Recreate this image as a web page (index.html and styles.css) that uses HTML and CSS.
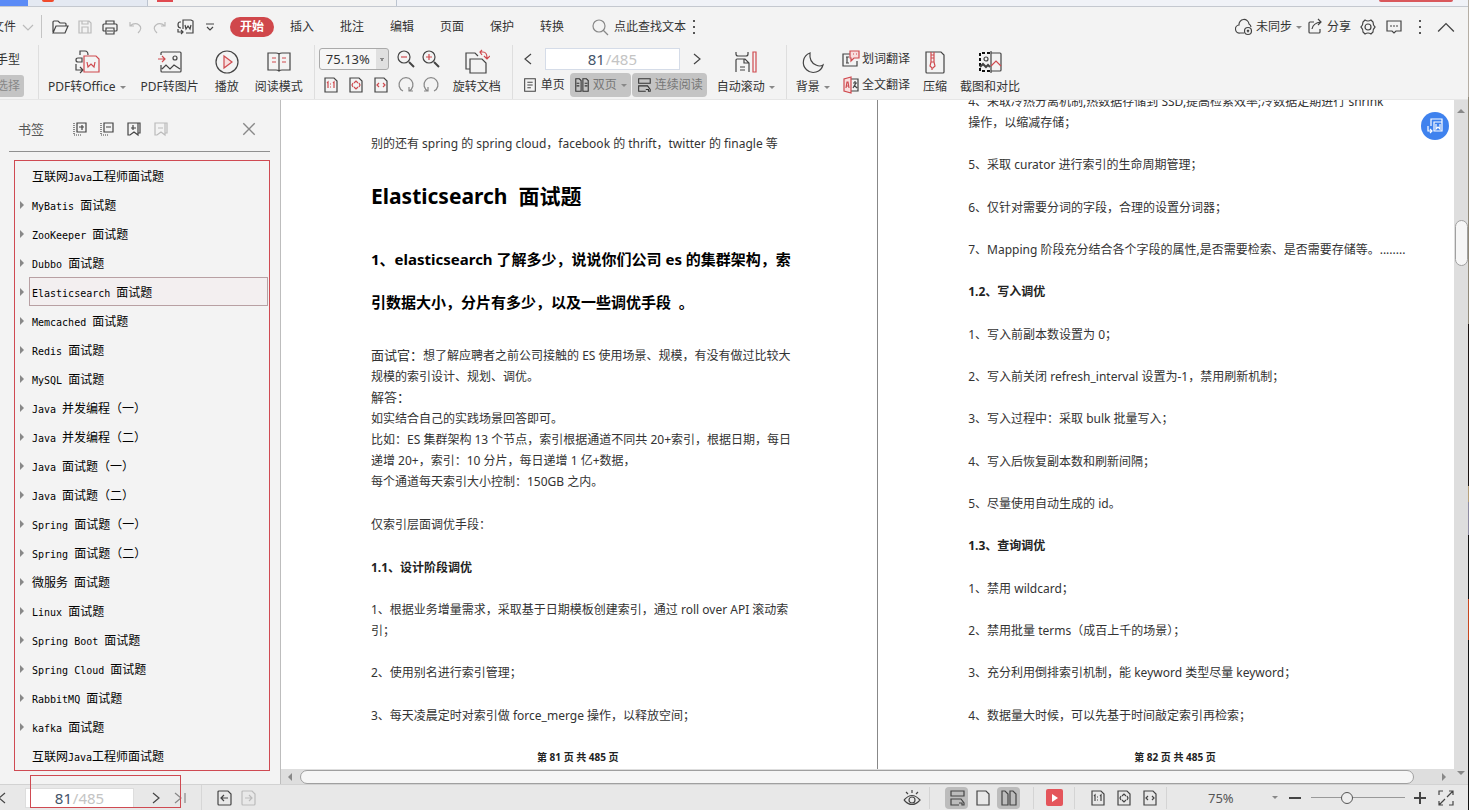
FILE: index.html
```html
<!DOCTYPE html>
<html lang="zh-CN">
<head>
<meta charset="utf-8">
<title>互联网Java工程师面试题</title>
<link rel="stylesheet" href="styles.css">
</head>
<body>
<svg class="defs" aria-hidden="true">
  <symbol id="down" viewBox="0 0 14 14"><path d="M2 5l5 5 5-5"/></symbol>
  <symbol id="up" viewBox="0 0 16 16"><path d="M1 12l7-7 7 7"/></symbol>
  <symbol id="left" viewBox="0 0 12 14"><path d="M9 2L3 7l6 5"/></symbol>
  <symbol id="right" viewBox="0 0 12 14"><path d="M3 2l6 5-6 5"/></symbol>
  <symbol id="last" viewBox="0 0 12 14"><path d="M1 2l6 5-6 5M11 2v10"/></symbol>
  <symbol id="open" viewBox="0 0 18 18"><path d="M2 14V4q0-1 1-1h4l2 2h5q1 0 1 1v2M2 15l3-7h12l-3 7H2z"/></symbol>
  <symbol id="save" viewBox="0 0 18 18"><path d="M3 3h10l2 2v10H3zM6 3v3h6V3M6 15V9h6v6"/></symbol>
  <symbol id="print" viewBox="0 0 18 18"><path d="M5 6V3h8v3M5 13H3q-1 0-1-1V7q0-1 1-1h12q1 0 1 1v5q0 1-1 1h-2M5 10h8v6H5zM6 13h6"/></symbol>
  <symbol id="undo" viewBox="0 0 18 18"><path d="M4 4v4h4M4 8q5-4 9-1t-1 8"/></symbol>
  <symbol id="redo" viewBox="0 0 18 18"><path d="M14 4v4h-4M14 8q-5-4-9-1t1 8"/></symbol>
  <symbol id="toword" viewBox="0 0 18 18"><path d="M7 11V2h8l2 1v12h-7M9 7l1 4 2-3 2 3 1-4M5 4H4q-2 0-2 3t3 3M2 11v3h5M5 12l2 2-2 2"/></symbol>
  <symbol id="more" viewBox="0 0 14 14"><path d="M3 4h8M4 7l3 3 3-3"/></symbol>
  <symbol id="search" viewBox="0 0 18 18"><circle cx="8" cy="8" r="6"/><path d="M12 12l5 5"/></symbol>
  <symbol id="dots" viewBox="0 0 6 18"><path class="f" d="M2 2h2v2H2zM2 8h2v2H2zM2 14h2v2H2z"/></symbol>
  <symbol id="cloud" viewBox="0 0 18 18"><path d="M9 15H5a4 4 0 0 1-1-8 5 5 0 0 1 10-1 4 4 0 0 1 2 3"/><circle cx="13" cy="13" r="3.5"/><path d="M12 12l2 2M14 12l-2 2"/></symbol>
  <symbol id="share" viewBox="0 0 18 18"><path d="M8 4H4q-1 0-1 1v9q0 1 1 1h9q1 0 1-1v-3M6 11q1-6 9-7M12 1l3 3-3 3"/></symbol>
  <symbol id="gear" viewBox="0 0 18 18"><path d="M6 2q3 2 6 0l2 2q0 3 2 5-2 2-2 5l-2 2q-3-2-6 0l-2-2q0-3-2-5 2-2 2-5z"/><circle cx="9" cy="9" r="3"/></symbol>
  <symbol id="chat" viewBox="0 0 18 18"><path d="M2 3h14v10h-5l-2 2-2-2H2zM5 8h2M8 8h2M11 8h2"/></symbol>
  <symbol id="office" viewBox="0 0 26 26"><path d="M6 6V2h5q3 0 3 4M6 9H4q-2 0-2 2t2 2h4V9H6M2 15v6h7M6 18l3 3-3 3"/><path class="r" d="M10 7h12l3 3v13H10zM13 13l1 5 3-3 3 3 1-5"/></symbol>
  <symbol id="picture" viewBox="0 0 26 26"><path d="M4 6V4q0-1 1-1h18q1 0 1 1v18q0 1-1 1H5q-1 0-1-1v-6M5 20l4-4 4 4 4-4 6 4"/><circle cx="18" cy="9" r="2"/><path class="r" d="M1 10h7M5 7l3 3-3 3"/></symbol>
  <symbol id="play" viewBox="0 0 26 26"><circle cx="13" cy="13" r="11"/><path class="r p" d="M10 7l8 6-8 6z"/></symbol>
  <symbol id="book" viewBox="0 0 26 26"><path d="M13 5q-1-1-3-1H2v17h8q2 0 3 1 1-1 3-1h8V4h-8q-2 0-3 1zM13 5v17"/><path class="r" d="M6 9h4M6 13h4M16 9h4M16 13h4"/></symbol>
  <symbol id="zoomout" viewBox="0 0 18 18"><circle cx="7" cy="7" r="6"/><path class="w" d="M12 12l5 5"/><path class="r" d="M4 7h6"/></symbol>
  <symbol id="zoomin" viewBox="0 0 18 18"><circle cx="7" cy="7" r="6"/><path class="w" d="M12 12l5 5"/><path class="r" d="M4 7h6M7 4v6"/></symbol>
  <symbol id="one" viewBox="0 0 18 18"><path d="M3 2h9l3 3v11H3z"/><path class="r" d="M5 7l1-1v6M11 7l1-1v6M8 8h1M8 11h1"/></symbol>
  <symbol id="fit" viewBox="0 0 18 18"><path d="M3 2h9l3 3v11H3z"/><path class="r" d="M7 7l2-2 2 2M7 11l2 2 2-2M6 7L5 9l1 2M12 7l1 2-1 2"/></symbol>
  <symbol id="width" viewBox="0 0 18 18"><path d="M3 2h9l3 3v11H3z"/><path class="r" d="M7 7L5 9l2 2M11 7l2 2-2 2"/></symbol>
  <symbol id="cw" viewBox="0 0 18 18"><path d="M6 15a7 7 0 1 1 6 0M12 11v4h4"/></symbol>
  <symbol id="ccw" viewBox="0 0 18 18"><path d="M12 15a7 7 0 1 0-6 0M6 11v4H2"/></symbol>
  <symbol id="rotate" viewBox="0 0 26 26"><path d="M6 20H2V4h9l3 3M6 10h12l4 4v10H6z"/><path class="r" d="M16 3h3q4 0 4 6M18 1l-2 2 2 3M20 7l3 3 3-3"/></symbol>
  <symbol id="single" viewBox="0 0 18 18"><path d="M3 2h12v14H3zM6 6h6M6 9h6M6 12h4"/></symbol>
  <symbol id="double" viewBox="0 0 18 18"><path d="M2 2h4l2 2v12H2zM10 2h4l2 2v12h-6zM3 7h3M3 10h3M12 7h3M12 10h3"/></symbol>
  <symbol id="cont" viewBox="0 0 18 18"><path d="M3 2h13v5H3zM11 16H3v-6h10l3 4v2h-2v-2h-3"/></symbol>
  <symbol id="scroll" viewBox="0 0 26 26"><path d="M3 3v2q0 2 2 2h8q2 0 2-2V3M3 23V11q0-1 1-1h8l4 4v9M11 10v4h5M7 18h5M7 21h5"/><path class="r" d="M20 3h3v20h-3z"/></symbol>
  <symbol id="moon" viewBox="0 0 26 26"><path d="M10 4A10 10 0 1 0 23 16Q20 18 16 16 9 13 10 4z"/></symbol>
  <symbol id="word" viewBox="0 0 18 18"><path d="M8 4H1v12h14v-5M4 7h3M5 7v6M4 13h3"/><path class="r p" d="M8 1h9v7h-5l-3 3V8H8zM11 4h1M14 4h1"/></symbol>
  <symbol id="trans" viewBox="0 0 18 18"><path d="M9 3h7v12H9M11 7h4M13 5v2M11 12l3-5M12 9l3 3"/><path class="r p" d="M9 1L2 3v12l7 2zM4 12l1-6h1l1 6M4 10h3"/></symbol>
  <symbol id="zip" viewBox="0 0 26 26"><path d="M4 3h15l3 3v17q0 1-1 1H5q-1 0-1-1z"/><path class="r" d="M9 3v10h3V3M9 6h3M9 9h3M9 13l-1 4 2 2h1l2-2-1-4M10 19v2"/></symbol>
  <symbol id="compare" viewBox="0 0 26 26"><path class="dash" d="M13 4H3v18h10"/><path class="w" d="M3 18l3-3 3 3 2-2 2 2"/><circle cx="9" cy="10" r="2"/><path d="M14 2v22M14 4h9q1 0 1 1v16q0 1-1 1h-9"/><path class="r" d="M14 17l5-5 5 5"/></symbol>
  <symbol id="expand" viewBox="0 0 16 16"><path d="M5 2h9v9H5zM7 6h5M10 4v5"/><path class="dot" d="M2 2v12h8"/></symbol>
  <symbol id="collapse" viewBox="0 0 16 16"><path d="M5 2h9v9H5zM7 6h5"/><path class="dot" d="M2 2v12h8"/></symbol>
  <symbol id="addmark" viewBox="0 0 16 16"><path d="M2 2h10v12l-4-3-4 3H2zM12 2h2v10h-2M5 7h5M7 4v5"/></symbol>
  <symbol id="delmark" viewBox="0 0 16 16"><path d="M2 2h10v12l-4-3-4 3H2zM12 2h2v10h-2M5 7h5"/></symbol>
  <symbol id="close" viewBox="0 0 14 14"><path d="M2 2l10 10M12 2L2 12"/></symbol>
  <symbol id="back" viewBox="0 0 18 18"><path d="M4 2h9l3 3v10q0 1-1 1H4q-1 0-1-1V3q0-1 1-1zM6 9h7M9 6L6 9l3 3"/></symbol>
  <symbol id="fwd" viewBox="0 0 18 18"><path d="M4 2h9l3 3v10q0 1-1 1H4q-1 0-1-1V3q0-1 1-1zM6 9h7M10 6l3 3-3 3"/></symbol>
  <symbol id="eye" viewBox="0 0 18 18"><path d="M1 11q8-9 16 0-8 9-16 0M9 1v3M3 3l2 2M15 3l-2 2"/><circle cx="9" cy="11" r="3"/></symbol>
  <symbol id="page" viewBox="0 0 18 18"><path d="M3 2h9l3 3v11H3z"/></symbol>
  <symbol id="pages" viewBox="0 0 18 18"><path d="M2 2h3l3 3v11H2zM10 2h3l3 3v11h-6z"/></symbol>
  <symbol id="minus" viewBox="0 0 14 14"><path class="w" d="M1 7h12"/></symbol>
  <symbol id="plus" viewBox="0 0 14 14"><path class="w" d="M1 7h12M7 1v12"/></symbol>
  <symbol id="full" viewBox="0 0 18 18"><path d="M2 6V2h4M16 12v4h-4M10 8l6-6M12 2h4v4M8 10l-6 6M2 12v4h4"/></symbol>
</svg>

<div class="window">
  <div class="tabs"><span class="tab home"></span><span class="tab"><i class="blob"></i></span><span class="tab current"><i class="blob pdf"></i></span><span class="login"></span></div>

  <header class="menu">
    <button class="file">文件<svg class="i14 pale"><use href="#down"/></svg></button>
    <i class="rule"></i>
    <div class="quick">
      <button aria-label="打开"><svg><use href="#open"/></svg></button>
      <button aria-label="保存"><svg class="pale"><use href="#save"/></svg></button>
      <button aria-label="打印"><svg><use href="#print"/></svg></button>
      <button aria-label="撤销"><svg class="pale"><use href="#undo"/></svg></button>
      <button aria-label="恢复"><svg class="pale"><use href="#redo"/></svg></button>
      <button aria-label="转Word"><svg><use href="#toword"/></svg></button>
      <button aria-label="更多"><svg class="i14"><use href="#more"/></svg></button>
    </div>
    <nav class="menus">
      <button class="on">开始</button><button>插入</button><button>批注</button><button>编辑</button><button>页面</button><button>保护</button><button>转换</button>
    </nav>
    <button class="find"><svg class="grey"><use href="#search"/></svg>点此查找文本<svg class="dots"><use href="#dots"/></svg></button>
    <div class="account">
      <button class="sync"><svg><use href="#cloud"/></svg>未同步<i class="caret"></i></button>
      <button><svg><use href="#share"/></svg>分享</button>
      <button aria-label="设置"><svg><use href="#gear"/></svg></button>
      <button aria-label="反馈"><svg><use href="#chat"/></svg></button>
      <button aria-label="更多"><svg><use href="#dots"/></svg></button>
      <button aria-label="收起"><svg><use href="#up"/></svg></button>
    </div>
  </header>

  <div class="ribbon">
    <div class="hand"><button>手型</button><button class="on">选择</button></div>
    <div class="group tools">
      <button class="big"><svg><use href="#office"/></svg><span>PDF转Office<i class="caret"></i></span></button>
      <button class="big"><svg><use href="#picture"/></svg><span>PDF转图片</span></button>
      <button class="big"><svg><use href="#play"/></svg><span>播放</span></button>
      <button class="big"><svg><use href="#book"/></svg><span>阅读模式</span></button>
    </div>
    <div class="group zoom">
      <div class="zoomgrid">
        <select aria-label="缩放比例"><option>75.13%</option></select>
        <button aria-label="缩小"><svg><use href="#zoomout"/></svg></button>
        <button aria-label="放大"><svg><use href="#zoomin"/></svg></button>
        <button aria-label="实际大小"><svg><use href="#one"/></svg></button>
        <button aria-label="适合页面"><svg><use href="#fit"/></svg></button>
        <button aria-label="适合宽度"><svg><use href="#width"/></svg></button>
        <button aria-label="顺时针"><svg class="grey"><use href="#cw"/></svg></button>
        <button aria-label="逆时针"><svg class="grey"><use href="#ccw"/></svg></button>
      </div>
      <button class="big"><svg><use href="#rotate"/></svg><span>旋转文档</span></button>
    </div>
    <div class="group view">
      <div class="stack">
        <div class="pager">
          <button aria-label="上一页"><svg><use href="#left"/></svg></button>
          <label class="pagebox"><input aria-label="页码" value="81"><span>/485</span></label>
          <button aria-label="下一页"><svg><use href="#right"/></svg></button>
        </div>
        <div class="modes">
          <button><svg><use href="#single"/></svg>单页</button>
          <button class="on"><svg><use href="#double"/></svg>双页<i class="caret"></i></button>
          <button class="on"><svg><use href="#cont"/></svg>连续阅读</button>
        </div>
      </div>
      <button class="big"><svg><use href="#scroll"/></svg><span>自动滚动<i class="caret"></i></span></button>
    </div>
    <div class="group last">
      <button class="big"><svg><use href="#moon"/></svg><span>背景<i class="caret"></i></span></button>
      <div class="stack trans">
        <button><svg><use href="#word"/></svg>划词翻译</button>
        <button><svg><use href="#trans"/></svg>全文翻译</button>
      </div>
      <button class="big"><svg><use href="#zip"/></svg><span>压缩</span></button>
      <button class="big"><svg><use href="#compare"/></svg><span>截图和对比</span></button>
    </div>
  </div>

  <div class="work">
    <aside class="side">
      <div class="sidehead">
        <h2>书签</h2>
        <button aria-label="展开"><svg><use href="#expand"/></svg></button>
        <button aria-label="折叠"><svg><use href="#collapse"/></svg></button>
        <button aria-label="添加书签"><svg><use href="#addmark"/></svg></button>
        <button aria-label="删除书签"><svg class="pale"><use href="#delmark"/></svg></button>
        <button class="x" aria-label="关闭"><svg class="i14 grey"><use href="#close"/></svg></button>
      </div>
      <ul class="marks">
        <li class="leaf"><a>互联网<b>Java</b>工程师面试题</a></li>
        <li><a><b>MyBatis </b>面试题</a></li>
        <li><a><b>ZooKeeper </b>面试题</a></li>
        <li><a><b>Dubbo </b>面试题</a></li>
        <li class="on"><a><b>Elasticsearch </b>面试题</a></li>
        <li><a><b>Memcached </b>面试题</a></li>
        <li><a><b>Redis </b>面试题</a></li>
        <li><a><b>MySQL </b>面试题</a></li>
        <li><a><b>Java </b>并发编程（一）</a></li>
        <li><a><b>Java </b>并发编程（二）</a></li>
        <li><a><b>Java </b>面试题（一）</a></li>
        <li><a><b>Java </b>面试题（二）</a></li>
        <li><a><b>Spring </b>面试题（一）</a></li>
        <li><a><b>Spring </b>面试题（二）</a></li>
        <li><a>微服务<b> </b>面试题</a></li>
        <li><a><b>Linux </b>面试题</a></li>
        <li><a><b>Spring Boot </b>面试题</a></li>
        <li><a><b>Spring Cloud </b>面试题</a></li>
        <li><a><b>RabbitMQ </b>面试题</a></li>
        <li><a><b>kafka </b>面试题</a></li>
        <li class="leaf"><a>互联网<b>Java</b>工程师面试题</a></li>
      </ul>
    </aside>

    <main class="viewer">
      <div class="pages">
        <article class="sheet first">
          <p>别的还有 spring 的 spring cloud，facebook 的 thrift，twitter 的 finagle 等</p>
          <h1>Elasticsearch&nbsp; 面试题</h1>
          <h2>1、elasticsearch 了解多少，说说你们公司 es 的集群架构，索<br>引数据大小，分片有多少，以及一些调优手段&nbsp; 。</h2>
          <p><big>面试官：</big>想了解应聘者之前公司接触的 ES 使用场景、规模，有没有做过比较大<br>规模的索引设计、规划、调优。<br><big>解答：</big><br>如实结合自己的实践场景回答即可。<br>比如：ES 集群架构 13 个节点，索引根据通道不同共 20+索引，根据日期，每日<br>递增 20+，索引：10 分片，每日递增 1 亿+数据，<br>每个通道每天索引大小控制：150GB 之内。</p>
          <p>仅索引层面调优手段：</p>
          <h3>1.1、设计阶段调优</h3>
          <p>1、根据业务增量需求，采取基于日期模板创建索引，通过 roll over API 滚动索<br>引；</p>
          <p>2、使用别名进行索引管理；</p>
          <p>3、每天凌晨定时对索引做 force_merge 操作，以释放空间；</p>
          <footer>第 81 页 共 485 页</footer>
        </article>
        <article class="sheet second">
          <p>4、采取冷热分离机制,热数据存储到 SSD,提高检索效率;冷数据定期进行 shrink<br>操作，以缩减存储；</p>
          <p>5、采取 curator 进行索引的生命周期管理；</p>
          <p>6、仅针对需要分词的字段，合理的设置分词器；</p>
          <p>7、Mapping 阶段充分结合各个字段的属性,是否需要检索、是否需要存储等。........</p>
          <h3>1.2、写入调优</h3>
          <p>1、写入前副本数设置为 0；</p>
          <p>2、写入前关闭 refresh_interval 设置为-1，禁用刷新机制；</p>
          <p>3、写入过程中：采取 bulk 批量写入；</p>
          <p>4、写入后恢复副本数和刷新间隔；</p>
          <p>5、尽量使用自动生成的 id。</p>
          <h3>1.3、查询调优</h3>
          <p>1、禁用 wildcard；</p>
          <p>2、禁用批量 terms（成百上千的场景）；</p>
          <p>3、充分利用倒排索引机制，能 keyword 类型尽量 keyword；</p>
          <p>4、数据量大时候，可以先基于时间敲定索引再检索；</p>
          <footer>第 82 页 共 485 页</footer>
        </article>
        <button class="convert" aria-label="转换"><svg viewBox="0 0 18 18"><path d="M5 9V2h11v3M8 5h8v9H8zM10 7v5l2-2 2 2V7M2 9v5h4M4 12l2 2-2 2"/></svg></button>
      </div>
      <div class="hbar"><i class="tri l"></i><i class="thumb"></i><i class="tri r"></i></div>
    </main>
    <div class="vbar"><i class="tri u"></i><i class="thumb"></i><i class="tri d"></i></div>
  </div>

  <footer class="status">
    <button class="prev" aria-label="上一页"><svg><use href="#left"/></svg></button>
    <label class="pagebox small"><input aria-label="当前页" value="81"><span>/485</span></label>
    <button aria-label="下一页"><svg><use href="#right"/></svg></button>
    <button aria-label="末页"><svg class="grey"><use href="#last"/></svg></button>
    <i class="rule"></i>
    <button aria-label="后退"><svg class="i18"><use href="#back"/></svg></button>
    <button aria-label="前进"><svg class="i18 pale"><use href="#fwd"/></svg></button>
    <span class="mark"></span>
    <div class="right">
      <button aria-label="护眼"><svg class="i18"><use href="#eye"/></svg></button>
      <i class="rule wide"></i>
      <button class="on" aria-label="连续"><svg class="i18"><use href="#cont"/></svg></button>
      <button aria-label="单页"><svg class="i18"><use href="#page"/></svg></button>
      <button class="on" aria-label="双页"><svg class="i18"><use href="#pages"/></svg></button>
      <i class="rule"></i>
      <button class="show" aria-label="播放"><i></i></button>
      <i class="rule"></i>
      <button aria-label="实际大小"><svg class="i18 mono"><use href="#one"/></svg></button>
      <button aria-label="适合页面"><svg class="i18 mono"><use href="#fit"/></svg></button>
      <button aria-label="适合宽度"><svg class="i18 mono"><use href="#width"/></svg></button>
      <i class="rule"></i>
      <button class="pct">75%<i class="caret"></i></button>
      <button aria-label="缩小"><svg class="i14"><use href="#minus"/></svg></button>
      <input class="slider" type="range" min="0" max="100" value="36" aria-label="缩放">
      <button aria-label="放大"><svg class="i14"><use href="#plus"/></svg></button>
      <button aria-label="全屏"><svg class="i18"><use href="#full"/></svg></button>
    </div>
  </footer>
</div>
<i class="edge"></i>
</body>
</html>
```
FILE: styles.css
```css
* { box-sizing: border-box; }
body {
  margin: 0;
  height: 100vh;
  display: flex;
  overflow: hidden;
  background: #f3f3f3;
  color: #333;
  font: 12px/20px "Noto Sans", "Noto Sans CJK SC", sans-serif;
}
button {
  display: flex;
  align-items: center;
  justify-content: center;
  padding: 0;
  border: 0;
  background: none;
  color: inherit;
  font: inherit;
  white-space: nowrap;
}
svg {
  flex: none;
  width: 18px;
  height: 18px;
  fill: none;
  stroke: #444;
  stroke-width: 1.2;
}
svg.defs { position: absolute; width: 0; height: 0; }
svg.i14 { width: 14px; height: 14px; }
svg.pale { stroke: #bbb; }
svg.grey { stroke: #888; }
.r { stroke: var(--accent, #cf4a4f); }
.p { fill: #f8dede; }
.w { stroke-width: 2; }
.f { fill: #555; stroke: none; }
.dot { stroke-dasharray: 1 1; }
.dash { stroke-dasharray: 3 2; stroke: #111; stroke-width: 2; }
.mono { --accent: #444; }
.caret {
  margin-left: 4px;
  border: 3px solid transparent;
  border-top-color: #888;
  border-bottom: 0;
}
.rule { width: 1px; align-self: stretch; background: #d6d6d6; }

.window { flex: 1; min-width: 0; display: flex; flex-direction: column; }
.edge {
  width: 1px;
  background: linear-gradient(#b5aea4 0 12%, #8f8878 12% 40%, #1a1210 40% 60%, #b59f78 60% 62%, #8d8aa0 62% 66%, #111 66% 74%, #c6451c 74% 79%, #111 79%);
}

.tabs {
  flex: none;
  height: 7px;
  display: flex;
  overflow: hidden;
  background: #f0f2f7;
  border-bottom: 1px solid #c4c8cf;
}
.tab { width: 120px; background: #e4e9f2; border-right: 1px solid #bcc4d0; }
.tab.home { width: 28px; background: #5b8bf6; border: 0; }
.tab.current { width: 249px; height: 7px; background: #f3f3f3; }
.blob { display: block; width: 12px; height: 2px; margin-left: 14px; border-radius: 0 0 6px 6px; background: #f04a2c; }
.blob.pdf { width: 16px; margin-left: 9px; background: #e04a50; border-radius: 0; }
.login { width: 74px; height: 2px; margin: 0 15px 0 auto; border-radius: 0 0 8px 8px; background: #d9585c; }

.menu { flex: none; height: 38px; display: flex; align-items: center; padding-top: 2px; }
.file { margin-left: -8px; gap: 5px; }
.menu > .rule { margin: 6px 9px 7px 6px; background: #c4c4c4; }
.quick { display: flex; gap: 7px; }
.quick button { width: 18px; }
.menus { display: flex; gap: 26px; margin-left: 11px; }
.menus .on {
  width: 44px;
  margin-right: -10px;
  border-radius: 10px;
  background: #d0474b;
  color: #fff;
  font-weight: bold;
}
.find { margin-left: 27px; gap: 5px; }
.find .dots { width: 6px; }
.account { display: flex; gap: 8px; margin: 0 13px 0 auto; }
.account button { gap: 3px; }
.account .sync { margin-right: -4px; }
.account .caret { margin-left: 1px; }

.ribbon { flex: none; height: 55px; display: flex; border-bottom: 1px solid #e6e6e6; }
.hand { width: 38px; display: flex; flex-direction: column; align-items: flex-start; gap: 4px; padding-top: 4px; }
.hand button { height: 22px; margin-left: -4px; padding-right: 4px; }
.hand .on { background: #c4c4c4; color: #888; border-radius: 0 3px 3px 0; }
.group { display: flex; gap: 15px; padding: 2px 11px 2px 9px; border-left: 1px solid #dedede; }
.big { flex-direction: column; justify-content: flex-start; gap: 2px; padding-top: 2px; }
.big svg { width: 26px; height: 26px; }
.big span { display: flex; align-items: center; }
.zoom { padding-left: 4px; gap: 9px; }
.zoomgrid { display: grid; grid-template-columns: repeat(5, 25px); grid-template-rows: 24px 24px; row-gap: 2px; }
.zoomgrid select {
  grid-column: span 3;
  width: 70px;
  height: 22px;
  margin-top: 1px;
  padding: 0 6px;
  border: 1px solid #aaa;
  border-radius: 3px;
  appearance: none;
  background: linear-gradient(45deg, transparent 50%, #888 50%) 59px 9px / 3px 3px no-repeat, linear-gradient(-45deg, transparent 50%, #888 50%) 62px 9px / 3px 3px no-repeat, linear-gradient(90deg, #f6f6f6 56px, #e0e0e0 56px);
  color: #333;
  font: 13px/20px "Noto Sans", sans-serif;
}
.stack { display: flex; flex-direction: column; gap: 3px; }
.view { gap: 10px; }
.pager { height: 22px; margin: 1px 4px 0 0; display: flex; align-items: center; gap: 11px; }
.pager svg, .status svg { width: 12px; height: 14px; }
.pagebox {
  flex: 1;
  height: 22px;
  display: flex;
  align-items: center;
  justify-content: center;
  border: 1px solid #d5dce8;
  background: #fff;
  color: #c4c4c4;
  font-size: 15px;
}
.pagebox input { width: 18px; padding: 0; border: 0; background: none; color: #44546a; font: inherit; }
.modes { display: flex; gap: 1px; }
.modes button { height: 24px; gap: 3px; padding: 0 4px; border-radius: 4px; }
.modes button:first-child { padding-left: 0; }
.modes svg { width: 16px; height: 16px; }
.modes .caret { margin-left: 1px; }
.modes .on { background: #c4c4c4; color: #777; }
.modes .on svg { stroke: #333; }
.last { gap: 12px; padding-left: 9px; }
.trans button { height: 24px; gap: 2px; }

.work { flex: 1; min-height: 0; display: flex; }
.side { flex: none; width: 281px; padding: 8px 10px 0 9px; border-right: 1px solid #bdbdbd; }
.sidehead { height: 44px; display: flex; align-items: center; gap: 11px; padding: 0 0 2px 9px; border-bottom: 1px solid #909090; }
.sidehead svg { width: 16px; height: 16px; }
.sidehead h2 { margin: 0 17px 0 0; color: #555; font-size: 13px; font-weight: normal; }
.sidehead .x { margin: 0 13px 0 auto; }
.marks {
  margin: 8px 0 0 5px;
  padding: 0 1px 0 0;
  border: 1px solid #cf4a52;
  list-style: none;
  color: #000;
}
.marks li { height: 29px; display: flex; align-items: center; padding-left: 5px; }
.marks li::before { content: ""; width: 0; border: 4px solid transparent; border-left-color: #888; border-right: 0; }
.marks .leaf::before { visibility: hidden; }
.marks a { flex: 1; height: 29px; margin-left: 5px; padding-left: 3px; line-height: 31px; }
.marks .on a { border: 1px solid #b8a0a3; padding-left: 2px; line-height: 29px; background: #f3eff0; }
.marks b { font: 10px "DejaVu Sans Mono", monospace; white-space: pre; }

.viewer { flex: 1; min-width: 0; display: flex; flex-direction: column; }
.pages { flex: 1; min-height: 0; position: relative; display: flex; overflow: hidden; background: #fff; }
.sheet {
  flex: 1;
  display: flex;
  flex-direction: column;
  padding: 33px 0 6px 90px;
  white-space: nowrap;
}
.first { flex: none; width: calc(51% - 1px); border-right: 1px solid #888; }
.second { padding-top: 0; margin-top: -9px; }
.sheet p, .sheet h3 { margin: 0 0 21px; font-size: 12px; line-height: 21px; }
.sheet h3 { color: #222; }
.second > :nth-child(3n + 2), .first > :nth-child(4), .first > :nth-child(5), .first > :nth-child(8) { margin-bottom: 22px; }
.sheet h1 { margin: 0 0 21px; color: #000; font-size: 21px; line-height: 42px; }
.sheet h2 { margin: 0 0 21px; color: #000; font-size: 15px; line-height: 43px; }
.sheet big { font-size: 13px; }
.sheet footer { margin: auto 0 0 166px; color: #222; font-size: 10px; font-weight: bold; }
.convert {
  position: absolute;
  top: 12px;
  right: 5px;
  width: 28px;
  height: 28px;
  border-radius: 50%;
  background: #3f82ee;
}
.convert svg { stroke: #fff; }
.tri { flex: none; border: 4px solid transparent; }
.tri.l { border-right-color: #888; border-left: 0; }
.tri.r { border-left-color: #888; border-right: 0; }
.tri.u { border-bottom-color: #888; border-top: 0; }
.tri.d { border-top-color: #888; border-bottom: 0; }
.thumb { border: 1px solid #a0a0a0; border-radius: 7px; background: #f6f6f6; }
.hbar { flex: none; height: 15px; display: flex; align-items: center; padding: 0 8px 0 7px; background: #dedede; }
.hbar .thumb { flex: 1; height: 14px; margin: 0 28px 0 8px; }
.vbar { flex: none; width: 14px; display: flex; flex-direction: column; align-items: center; padding: 9px 0; background: #dedede; }
.vbar .thumb { width: 13px; height: 46px; margin: 107px 0 auto; }

.status { flex: none; height: 26px; position: relative; display: flex; align-items: center; background: #e8e8e8; border-top: 1px solid #d2d2d2; }
.status svg.i18 { width: 18px; height: 18px; }
.status svg.i14 { width: 14px; height: 14px; }
.prev { margin: 0 17px 0 -4px; }
.pagebox.small { flex: none; width: 109px; height: 20px; margin-right: 16px; border-color: #ddd; }
.status > button + button { margin-left: 12px; }
.status > .rule { margin: 0 13px 0 15px; }
.status > .rule + button + button { margin-left: 6px; }
.mark { position: absolute; left: 30px; top: -10px; width: 151px; height: 33px; border: 1px solid #cf4a52; }
.right { display: flex; align-items: center; gap: 3px; margin: 0 11px 0 auto; }
.right button { width: 23px; height: 22px; border-radius: 4px; }
.right .rule { margin: 0 8px 0 2px; background: #d4d4d4; }
.right .rule.wide { margin: 0 12px 0 3px; }
.right .on { background: #bcbcbc; }
.right .on + .rule { margin-left: 10px; }
.right .show { width: 17px; height: 17px; margin: 0 6px 0 1px; border-radius: 2px; background: #e4555b; }
.show i { border: 4px solid transparent; border-left: 6px solid #fff; border-right: 0; }
.right .pct { width: 70px; justify-content: space-between; margin: 0 2px 0 30px; font-size: 13px; color: #555; }
.slider { width: 94px; height: 14px; margin: 0 0 0 2px; appearance: none; background: linear-gradient(#999, #999) 0 50% / 100% 1px no-repeat; }
.slider::-webkit-slider-thumb { appearance: none; width: 12px; height: 12px; border: 1px solid #555; border-radius: 50%; background: #eee; }
```
